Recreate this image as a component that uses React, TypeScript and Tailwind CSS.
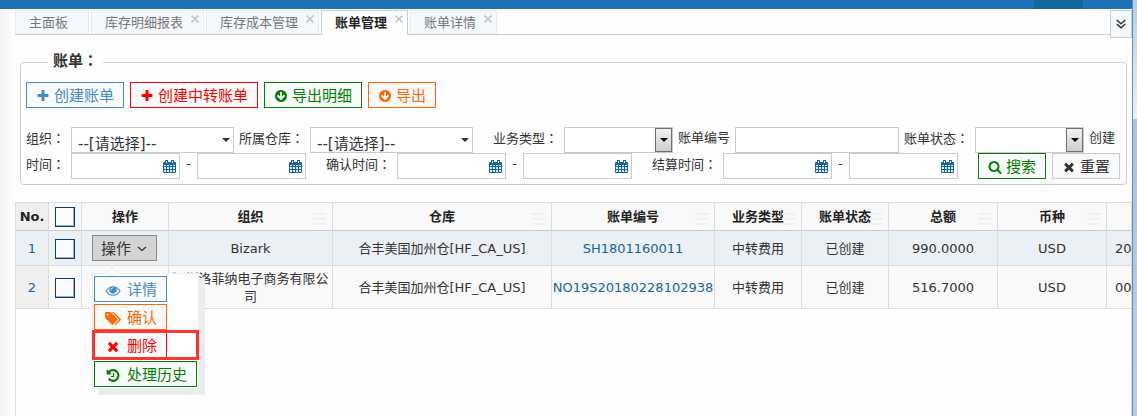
import React from "react";
import clsx from "clsx";

const ICONS = {
  plus: "M1600 736v192q0 40-28 68t-68 28h-416v416q0 40-28 68t-68 28h-192q-40 0-68-28t-28-68v-416h-416q-40 0-68-28t-28-68v-192q0-40 28-68t68-28h416v-416q0-40 28-68t68-28h192q40 0 68 28t28 68v416h416q40 0 68 28t28 68z",
  times:
    "M1490 1322q0 40-28 68l-136 136q-28 28-68 28t-68-28l-294-294-294 294q-28 28-68 28t-68-28l-136-136q-28-28-28-68t28-68l294-294-294-294q-28-28-28-68t28-68l136-136q28-28 68-28t68 28l294 294 294-294q28-28 68-28t68 28l136 136q28 28 28 68t-28 68l-294 294 294 294q28 28 28 68z",
  down: "M1412 897q0-27-18-45l-91-91q-18-18-45-18t-45 18l-189 189v-502q0-26-19-45t-45-19h-128q-26 0-45 19t-19 45v502l-189-189q-19-19-45-19t-45 19l-91 91q-18 18-18 45t18 45l362 362 91 91q18 18 45 18t45-18l91-91 362-362q18-18 18-45zm252-1q0 209-103 385.5t-279.5 279.5-385.5 103-385.5-103-279.5-279.5-103-385.5 103-385.5 279.5-279.5 385.5-103 385.5 103 279.5 279.5 103 385.5z",
  search:
    "M1216 832q0-185-131.5-316.5t-316.5-131.5-316.5 131.5-131.5 316.5 131.5 316.5 316.5 131.5 316.5-131.5 131.5-316.5zm512 832q0 52-38 90t-90 38q-54 0-90-38l-343-342q-179 124-399 124-143 0-273.5-55.5t-225-150-150-225-55.5-273.5 55.5-273.5 150-225 225-150 273.5-55.5 273.5 55.5 225 150 150 225 55.5 273.5q0 220-124 399l343 343q37 37 37 90z",
  eye: "M1664 960q-152-236-381-353 61 104 61 225 0 185-131.5 316.5t-316.5 131.5-316.5-131.5-131.5-316.5q0-121 61-225-229 117-381 353 133 205 333.5 326.5t434.5 121.5 434.5-121.5 333.5-326.5zm-720-384q0-20-14-34t-34-14q-125 0-214.5 89.5t-89.5 214.5q0 20 14 34t34 14 34-14 14-34q0-86 61-147t147-61q20 0 34-14t14-34zm848 384q0 34-20 69-140 230-376.5 368.5t-499.5 138.5-499.5-139-376.5-368q-20-35-20-69t20-69q140-229 376.5-368t499.5-139 499.5 139 376.5 368q20 35 20 69z",
  tags: "M448 448q0-53-37.5-90.5t-90.5-37.5-90.5 37.5-37.5 90.5 37.5 90.5 90.5 37.5 90.5-37.5 37.5-90.5zm1067 576q0 53-37 90l-491 492q-39 37-91 37-53 0-90-37l-715-716q-38-37-64.5-101t-26.5-117v-416q0-52 38-90t90-38h416q53 0 117 26.5t102 64.5l715 714q37 39 37 91zm384 0q0 53-37 90l-491 492q-39 37-91 37-36 0-59-14t-53-45l470-470q37-37 37-90 0-52-37-91l-715-714q-38-38-102-64.5t-117-26.5h224q53 0 117 26.5t102 64.5l715 714q37 39 37 91z",
  history:
    "M1664 896q0 156-61 298t-164 245-245 164-298 61q-172 0-327-72.5t-264-204.5q-7-10-6.5-22.5t8.5-20.5l137-138q10-9 25-9 16 2 23 12 73 95 179 147t225 52q104 0 198.5-40.5t163.5-109.5 109.5-163.5 40.5-198.5-40.5-198.5-109.5-163.5-163.5-109.5-198.5-40.5q-98 0-188 35.5t-160 101.5l137 138q31 30 14 69-17 40-59 40h-448q-26 0-45-19t-19-45v-448q0-42 40-59 39-17 69 14l130 129q107-101 244.5-156.5t284.5-55.5q156 0 298 61t245 164 164 245 61 298zm-640-288v448q0 14-9 23t-23 9h-320q-14 0-23-9t-9-23v-64q0-14 9-23t23-9h224v-352q0-14 9-23t23-9h64q14 0 23 9t9 23z",
};

type IconName = keyof typeof ICONS;

const Icon = ({ name, className }: { name: IconName; className?: string }) => (
  <svg
    viewBox={name === "tags" ? "0 0 1920 1792" : "0 0 1792 1792"}
    fill="currentColor"
    aria-hidden="true"
    className={clsx("shrink-0", className)}
  >
    <path d={ICONS[name]} />
  </svg>
);

const CalendarIcon = () => (
  <svg width="13" height="13" viewBox="0 0 13 13" fill="#17659b" aria-hidden="true">
    <path d="M1 2h1V0h3v2h3V0h3v2h1q1 0 1 1v9q0 1-1 1H1q-1 0-1-1V3q0-1 1-1z" />
    <path
      d="M1 5h2v1H1zM4 5h2v1H4zM7 5h2v1H7zM10 5h2v1h-2zM1 7h2v2H1zM4 7h2v2H4zM7 7h2v2H7zM10 7h2v2h-2zM1 10h2v2H1zM4 10h2v2H4zM7 10h2v2H7zM10 10h2v2h-2zM3 1h1v2H3zM9 1h1v2H9z"
      fill="#dcebf5"
    />
  </svg>
);

const Colon = () => (
  <span className="font-['Noto_Sans_CJK_TC',sans-serif]">：</span>
);

const tabs = [
  { title: "主面板", closable: false, active: false },
  { title: "库存明细报表", closable: true, active: false },
  { title: "库存成本管理", closable: true, active: false },
  { title: "账单管理", closable: true, active: true },
  { title: "账单详情", closable: true, active: false },
];

const TabBar = () => (
  <div className="flex h-[25px] mt-px">
    <div className="flex flex-1 gap-0.5 border-b border-[#c3cdd3]">
      {tabs.map((tab) => (
        <div
          key={tab.title}
          className={clsx(
            "flex border border-b-0 pl-[13px]",
            tab.active
              ? "-mb-px bg-white border-[#c3cdd3] text-[#222] font-bold"
              : "bg-[#f3f8fc] border-[#e8ebed] text-[#777]",
            tab.closable ? "pr-1" : "pr-5"
          )}
        >
          <button type="button" className="h-6">
            {tab.title}
          </button>
          {tab.closable && (
            <button
              type="button"
              aria-label="关闭"
              className="ml-2 mt-1 h-2 w-2 text-[#c4c8ca]"
            >
              <svg width="8" height="8" viewBox="0 0 8 8" aria-hidden="true" className="block">
                <path d="M.5 .5l7 7M7.500 .5l-7 7" stroke="currentColor" strokeWidth="1.700" />
              </svg>
            </button>
          )}
        </div>
      ))}
    </div>
    <button
      type="button"
      aria-label="更多"
      className="flex h-7 w-[22px] shrink-0 items-center justify-center border border-[#c3cdd3] bg-[#f3f8fc] text-[#333]"
    >
      <svg width="10" height="10" viewBox="0 0 10 10" fill="none" aria-hidden="true">
        <path d="M.7 1L5 4.800 9.300 1M.7 5L5 8.800 9.300 5" stroke="currentColor" strokeWidth="1.5" />
      </svg>
    </button>
  </div>
);

const tones = {
  blue: "border-[#428bca] text-[#428bca]",
  red: "border-[#ff0000] text-[#ff0000]",
  green: "border-[#008000] text-[#008000]",
  orange: "border-[#ff6600] text-[#ff6600]",
  plain: "border-[#c3cdd3] text-[#333]",
};

const ActionButton = ({
  icon,
  tone,
  children,
}: {
  icon: IconName;
  tone: keyof typeof tones;
  children: React.ReactNode;
}) => (
  <button
    type="button"
    className={clsx(
      "flex h-[26px] items-center gap-1 border bg-[#fafafa] px-[9px] pt-0.5 text-[15px]",
      tones[tone]
    )}
  >
    <Icon name={icon} className="h-[14px] w-[14px]" />
    {children}
  </button>
);

const MenuButton = ({
  icon,
  tone,
  children,
}: {
  icon: IconName;
  tone: keyof typeof tones;
  children: React.ReactNode;
}) => (
  <button
    type="button"
    className={clsx(
      "flex h-[26px] items-center gap-[5px] border bg-[#fafafa] px-[9px] pt-0.5 text-[15px] whitespace-nowrap",
      tones[tone]
    )}
  >
    <span className="flex w-[18px] justify-center">
      <Icon name={icon} className="h-[15px] w-4" />
    </span>
    {children}
  </button>
);

const labelClass = "shrink-0 leading-[22px] whitespace-nowrap";

// bootstrap style picker with a small caret
const Picker = ({ id }: { id: string }) => (
  <div className="relative w-[163px] shrink-0">
    <select
      id={id}
      className="block h-[26px] w-full appearance-none border border-[#c3cdd3] bg-white pl-[6px] pt-1.5 text-[15px] leading-5 text-[#333]"
    >
      <option>--[请选择]--</option>
    </select>
    <span className="pointer-events-none absolute right-1 top-[11px] border-x-4 border-t-4 border-x-transparent border-t-[#333]" />
  </div>
);

// plain select with the old raised arrow box
const NativeSelect = ({ id }: { id: string }) => (
  <div className="relative w-[109px] shrink-0">
    <select
      id={id}
      className="block h-[26px] w-full appearance-none border border-[#c9c9c9] bg-white"
    >
      <option></option>
    </select>
    <span className="pointer-events-none absolute right-px top-px flex h-6 w-[17px] items-center justify-center border border-[#707070] bg-linear-to-b from-[#f2f2f2] to-[#cfcfcf]">
      <span className="border-x-4 border-t-4 border-x-transparent border-t-black" />
    </span>
  </div>
);

const DateInput = ({ id, label }: { id: string; label: string }) => (
  <div className="relative w-[109px] shrink-0">
    <input
      id={id}
      type="text"
      aria-label={label}
      className="block h-[26px] w-full border border-[#c9c9c9] bg-white px-1"
    />
    <span className="pointer-events-none absolute right-1 top-[7px]">
      <CalendarIcon />
    </span>
  </div>
);

const DateRange = ({ id, label }: { id: string; label: string }) => (
  <div className="flex">
    <DateInput id={id + "-from"} label={label + "从"} />
    <span className="w-[17px] text-center leading-[22px]">-</span>
    <DateInput id={id + "-to"} label={label + "到"} />
  </div>
);

const FilterPanel = () => (
  <fieldset className="mx-[5px] mt-[17px] rounded-[4px] border border-[#c3cdd3] px-[5px] pb-[5px]">
    <legend className="ml-[22px] h-5 px-[5px] text-[15px] font-bold leading-4">
      账单
      <Colon />
    </legend>
    <div className="flex gap-[6px] pt-[10px]">
      <ActionButton icon="plus" tone="blue">
        创建账单
      </ActionButton>
      <ActionButton icon="plus" tone="red">
        创建中转账单
      </ActionButton>
      <ActionButton icon="down" tone="green">
        导出明细
      </ActionButton>
      <ActionButton icon="down" tone="orange">
        导出
      </ActionButton>
    </div>

    <div className="mt-[19px] flex">
      <label htmlFor="org" className={clsx(labelClass, "w-[45px]")}>
        组织
        <Colon />
      </label>
      <Picker id="org" />
      <label htmlFor="warehouse" className={clsx(labelClass, "ml-[5px] w-[71px]")}>
        所属仓库
        <Colon />
      </label>
      <Picker id="warehouse" />
      <label htmlFor="biz" className={clsx(labelClass, "ml-5 w-[71px]")}>
        业务类型
        <Colon />
      </label>
      <NativeSelect id="biz" />
      <label htmlFor="bill-no" className={clsx(labelClass, "ml-[5px] w-[57px]")}>
        账单编号
      </label>
      <input
        id="bill-no"
        type="text"
        className="h-[26px] w-[164px] shrink-0 border border-[#c9c9c9] bg-white px-1"
      />
      <label htmlFor="status" className={clsx(labelClass, "ml-[5px] w-[71px]")}>
        账单状态
        <Colon />
      </label>
      <NativeSelect id="status" />
      <label htmlFor="created-from" className={clsx(labelClass, "ml-[5px]")}>
        创建
      </label>
    </div>

    <div className="flex">
      <label htmlFor="created-from" className={clsx(labelClass, "w-[45px]")}>
        时间
        <Colon />
      </label>
      <DateRange id="created" label="创建时间" />
      <label htmlFor="confirmed-from" className={clsx(labelClass, "ml-5 w-[71px]")}>
        确认时间
        <Colon />
      </label>
      <DateRange id="confirmed" label="确认时间" />
      <label htmlFor="settled-from" className={clsx(labelClass, "ml-5 w-[71px]")}>
        结算时间
        <Colon />
      </label>
      <DateRange id="settled" label="结算时间" />
      <div className="ml-5 flex gap-[6px]">
        <ActionButton icon="search" tone="green">
          搜索
        </ActionButton>
        <ActionButton icon="times" tone="plain">
          重置
        </ActionButton>
      </div>
    </div>
  </fieldset>
);

const Checkbox = ({ label }: { label: string }) => (
  <input
    type="checkbox"
    aria-label={label}
    className="block mx-auto h-5 w-5 appearance-none border border-[#0b3c6b] bg-[#f9fbfc] shadow-[inset_-1px_-1px_0_#9db0c2]"
  />
);

const RowMenu = () => (
  <div className="absolute left-0 top-[38px] z-10 border border-[#eee] bg-white p-px pt-0.5 shadow-[6px_6px_0_#ececec]">
    <svg
      className="absolute -top-2 left-3"
      width="14"
      height="9"
      viewBox="0 0 14 9"
      aria-hidden="true"
    >
      <path d="M0 8L7 1l7 7v1H0z" fill="#fff" />
      <path d="M0 8L7 1l7 7" fill="none" stroke="#e6e6e6" />
    </svg>
    <div className="flex flex-col items-start gap-0.5">
      <MenuButton icon="eye" tone="blue">
        详情
      </MenuButton>
      <MenuButton icon="tags" tone="orange">
        确认
      </MenuButton>
      <MenuButton icon="times" tone="red">
        删除
      </MenuButton>
      <div className="pt-px">
        <MenuButton icon="history" tone="green">
          处理历史
        </MenuButton>
      </div>
    </div>
    <span className="pointer-events-none absolute -left-px -right-px top-14 h-[30px] border-3 border-[#fb3333]" />
  </div>
);

const columns = [
  { title: "组织", width: "w-[164px]" },
  { title: "仓库", width: "w-[219px]" },
  { title: "账单编号", width: "w-[163px]" },
  { title: "业务类型", width: "w-[87px]" },
  { title: "账单状态", width: "w-[87px]" },
  { title: "总额", width: "w-[109px]" },
  { title: "币种", width: "w-[109px]" },
];

const rows = [
  {
    org: "Bizark",
    warehouse: "合丰美国加州仓[HF_CA_US]",
    no: "SH1801160011",
    type: "中转费用",
    status: "已创建",
    total: "990.0000",
    currency: "USD",
    date: "20",
  },
  {
    org: "深圳洛菲纳电子商务有限公司",
    warehouse: "合丰美国加州仓[HF_CA_US]",
    no: "NO19S20180228102938",
    type: "中转费用",
    status: "已创建",
    total: "516.7000",
    currency: "USD",
    date: "00",
  },
];

const plainCell = "border-r border-b border-[#dcdcdc] p-0 text-center";
const cell = "border-r border-b border-[#dcdcdc] p-0 pt-0.5 text-center";
const headCell =
  "relative border-r border-b border-r-[#dcdcdc] border-b-[#c3cdd3] p-0 text-center font-bold text-[#222]";

const BillTable = () => (
  <div className="mt-[17px] flex-1 border-x border-t border-[#dcdcdc]">
    <table className="w-full table-fixed border-separate border-spacing-0 leading-[18px]">
      <thead>
        <tr className="h-7 bg-[#f9f9f9]">
          <th className={clsx(headCell, "w-[33px] bg-[#efefef]")}>No.</th>
          <th className={clsx(headCell, "w-[33px]")}>
            <Checkbox label="全选" />
          </th>
          <th className={clsx(headCell, "w-[87px]")}>操作</th>
          {columns.map((c) => (
            <th key={c.title} className={clsx(headCell, c.width)}>
              {c.title}
              <span className="absolute right-[6px] top-[10px] flex h-[12px] w-[13px] flex-col justify-between">
                <span className="h-0.5 bg-[#f0f0f0]" />
                <span className="h-0.5 bg-[#f0f0f0]" />
                <span className="h-0.5 bg-[#f0f0f0]" />
              </span>
            </th>
          ))}
          <th className="border-b border-[#c3cdd3]"></th>
        </tr>
      </thead>
      <tbody>
        {rows.map((row, i) => (
          <tr
            key={row.no}
            className={i === 0 ? "h-[35px] bg-[#ebf0f4]" : "h-[43px] bg-[#f9f9f9]"}
          >
            <td className={clsx(cell, "text-[#17659b]", i === 1 && "bg-[#efefef]")}>
              {i + 1}
            </td>
            <td className={cell}>
              <Checkbox label={"选择" + row.no} />
            </td>
            <td className={plainCell}>
              {i === 0 && (
                <div className="relative ml-[10px] w-fit">
                  <button
                    type="button"
                    className="flex h-[26px] w-[65px] items-center gap-[6px] border border-[#888] bg-[#d4d4d4] pl-2 pt-0.5 text-[15px] text-[#333]"
                  >
                    操作
                    <svg width="10" height="6" viewBox="0 0 10 6" fill="none" aria-hidden="true">
                      <path d="M1 1l4 3.500L9 1" stroke="currentColor" strokeWidth="1.300" />
                    </svg>
                  </button>
                  <RowMenu />
                </div>
              )}
            </td>
            <td className={cell}>{row.org}</td>
            <td className={cell}>{row.warehouse}</td>
            <td className={cell}>
              <a href="#" className="text-[#17659b]">
                {row.no}
              </a>
            </td>
            <td className={cell}>{row.type}</td>
            <td className={cell}>{row.status}</td>
            <td className={cell}>{row.total}</td>
            <td className={cell}>{row.currency}</td>
            <td className="overflow-hidden border-b border-[#dcdcdc] p-0 pl-2 pt-0.5 text-left">
              {row.date}
            </td>
          </tr>
        ))}
      </tbody>
    </table>
  </div>
);

const App = () => {
  return (
    <div className="flex min-h-screen bg-[#fefefe] font-['DejaVu_Sans','Noto_Sans_CJK_SC',sans-serif] text-[13px] text-[#333]">
      <div className="flex min-w-0 flex-1 flex-col">
        <div className="flex h-[9px] justify-end bg-[#2072b8] pr-[49px]">
          <div className="w-[49px] bg-[#16669e]" />
        </div>
        <div className="flex flex-1">
          <div className="w-[15px] shrink-0 bg-linear-to-r from-[#f4f4f4] to-[#fefefe]" />
          <main className="flex min-w-0 flex-1 flex-col">
            <TabBar />
            <FilterPanel />
            <BillTable />
          </main>
        </div>
      </div>
      {/* window frame */}
      <div className="flex w-[5px] shrink-0 flex-col border-l border-[#7388a5] bg-[#b0cae8]">
        <div className="h-[119px] bg-linear-to-b from-[#b0cdec] to-[#e8f1fa]" />
        <div className="flex-1 bg-linear-to-b from-[#a6c4e4] to-[#b4cfee]" />
      </div>
    </div>
  );
};

export default App;
